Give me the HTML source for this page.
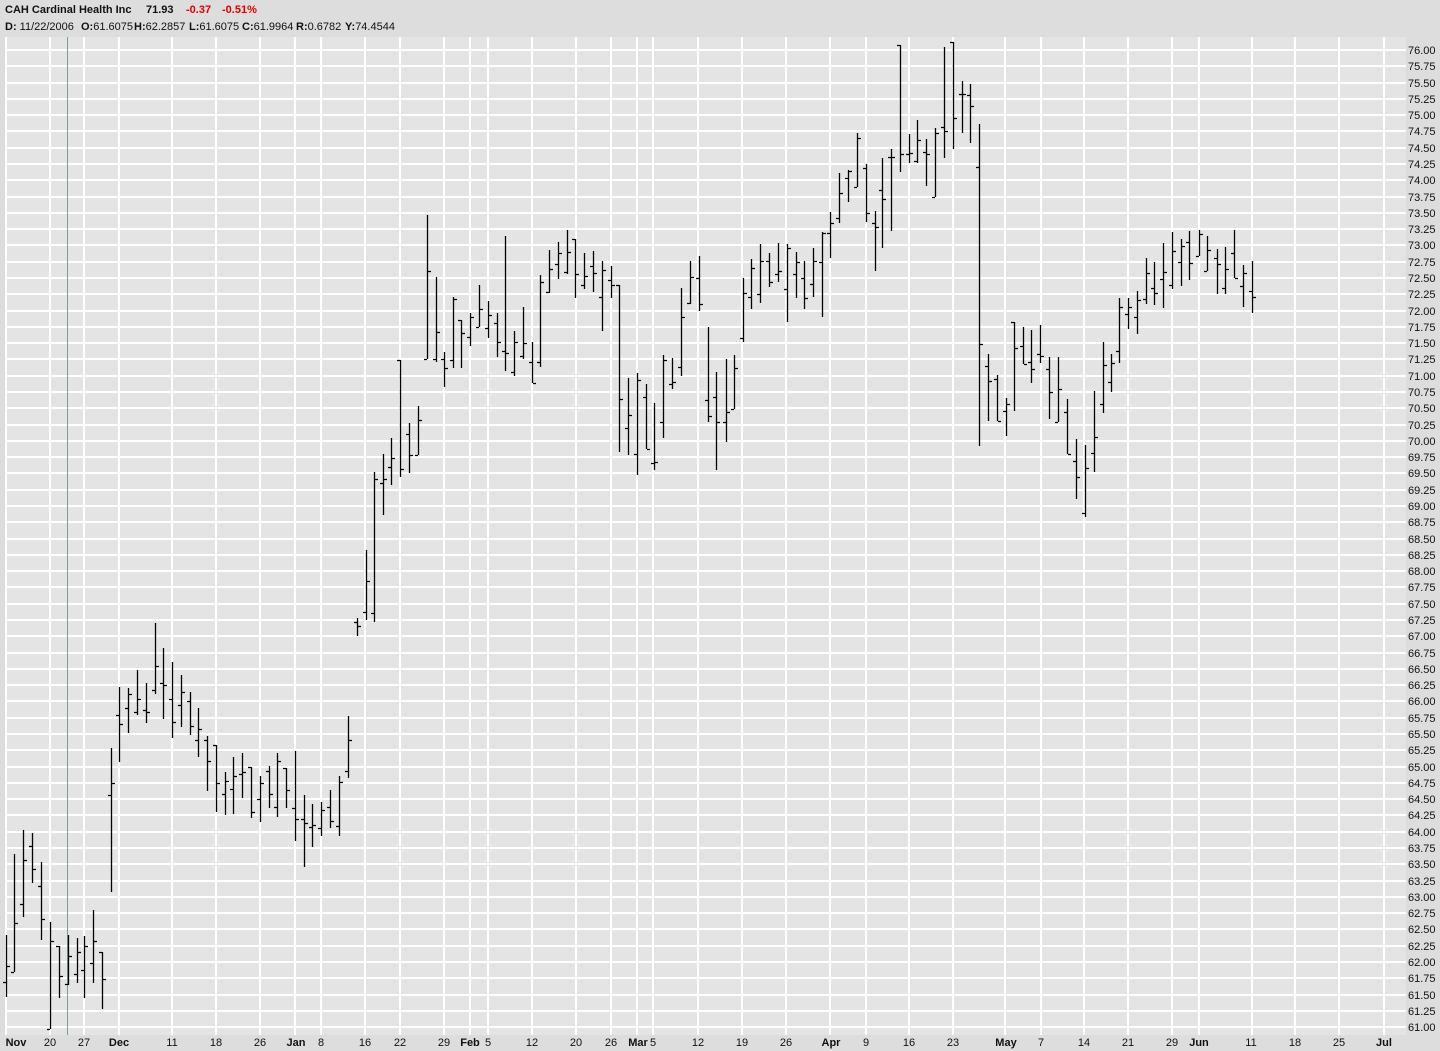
<!DOCTYPE html>
<html><head><meta charset="utf-8"><style>
html,body{margin:0;padding:0;width:1440px;height:1051px;overflow:hidden;background:#dddddd;font-family:"Liberation Sans",Arial,sans-serif;}
.h{position:absolute;font-size:11px;color:#111;white-space:nowrap}
.b{font-weight:bold}
.r{color:#e00000}
</style></head><body>
<div class="h b" style="left:5px;top:4px;">CAH Cardinal Health Inc</div>
<div class="h b" style="left:146px;top:4px;">71.93</div>
<div class="h b r" style="left:186px;top:4px;">-0.37</div>
<div class="h b r" style="left:222px;top:4px;">-0.51%</div>
<div class="h" style="left:5px;top:21px;"><b>D:</b> 11/22/2006</div>
<div class="h" style="left:81px;top:21px;"><b>O:</b>61.6075</div>
<div class="h" style="left:134px;top:21px;"><b>H:</b>62.2857</div>
<div class="h" style="left:189px;top:21px;"><b>L:</b>61.6075</div>
<div class="h" style="left:242px;top:21px;"><b>C:</b>61.9964</div>
<div class="h" style="left:296px;top:21px;"><b>R:</b>0.6782</div>
<div class="h" style="left:345px;top:21px;"><b>Y:</b>74.4544</div>
<svg width="1440" height="1051" style="position:absolute;left:0;top:0" xmlns="http://www.w3.org/2000/svg">
<rect x="5" y="37" width="1401" height="998" fill="#e4e4e4"/>
<path stroke="#ffffff" stroke-width="2" fill="none" d="M5 50H1406M5 66H1406M5 83H1406M5 99H1406M5 115H1406M5 131H1406M5 148H1406M5 164H1406M5 180H1406M5 197H1406M5 213H1406M5 229H1406M5 245H1406M5 262H1406M5 278H1406M5 294H1406M5 311H1406M5 327H1406M5 343H1406M5 359H1406M5 376H1406M5 392H1406M5 408H1406M5 425H1406M5 441H1406M5 457H1406M5 473H1406M5 490H1406M5 506H1406M5 522H1406M5 539H1406M5 555H1406M5 571H1406M5 587H1406M5 604H1406M5 620H1406M5 636H1406M5 653H1406M5 669H1406M5 685H1406M5 701H1406M5 718H1406M5 734H1406M5 750H1406M5 767H1406M5 783H1406M5 799H1406M5 815H1406M5 832H1406M5 848H1406M5 864H1406M5 881H1406M5 897H1406M5 913H1406M5 929H1406M5 946H1406M5 962H1406M5 978H1406M5 995H1406M5 1011H1406M5 1027H1406"/>
<path stroke="#ffffff" stroke-width="2" fill="none" d="M6 37V1035M50 37V1035M84 37V1035M119 37V1035M172 37V1035M216 37V1035M260 37V1035M295 37V1035M321 37V1035M365 37V1035M400 37V1035M444 37V1035M470 37V1035M488 37V1035M532 37V1035M576 37V1035M611 37V1035M637 37V1035M653 37V1035M698 37V1035M742 37V1035M786 37V1035M830 37V1035M866 37V1035M909 37V1035M953 37V1035M1005 37V1035M1041 37V1035M1084 37V1035M1128 37V1035M1172 37V1035M1199 37V1035M1252 37V1035M1295 37V1035M1339 37V1035M1384 37V1035"/>
<line x1="67.5" y1="37" x2="67.5" y2="1035" stroke="#7a9e9e" stroke-width="1"/>
<path stroke="#000" stroke-width="1.3" fill="none" d="
M6.5 935V997M3 982.5h3M7 966.5h3
M14.5 854V972M11 972.5h3M15 923.5h3
M23.5 830V917M20 904.5h3M24 860.5h3
M32.5 833V883M29 846.5h3M33 869.5h3
M41.5 862V940M38 886.5h3M42 919.5h3
M50.5 922V1029M47 1029.5h3M51 941.5h3
M59.5 946V998M56 946.5h3M60 976.5h3
M68.5 935V985M65 984.5h3M69 956.5h3
M77.5 938V983M74 974.5h3M78 952.5h3
M84.5 936V998M81 970.5h3M85 946.5h3
M93.5 910V983M90 963.5h3M94 941.5h3
M102.5 952V1009M99 952.5h3M103 979.5h3
M111.5 748V892M108 795.5h3M112 783.5h3
M119.5 687V762M116 715.5h3M120 724.5h3
M128.5 688V733M125 708.5h3M129 694.5h3
M137.5 670V715M134 712.5h3M138 699.5h3
M146.5 683V723M143 710.5h3M147 712.5h3
M155.5 623V694M152 690.5h3M156 666.5h3
M163.5 648V719M160 683.5h3M164 685.5h3
M172.5 662V738M169 699.5h3M173 722.5h3
M181.5 675V727M178 705.5h3M182 692.5h3
M190.5 692V735M187 701.5h3M191 726.5h3
M198.5 708V757M195 740.5h3M199 729.5h3
M207.5 736V791M204 740.5h3M208 761.5h3
M216.5 745V812M213 745.5h3M217 783.5h3
M225.5 772V815M222 794.5h3M226 781.5h3
M233.5 757V814M230 789.5h3M234 776.5h3
M242.5 753V798M239 774.5h3M243 772.5h3
M251.5 767V818M248 767.5h3M252 812.5h3
M260.5 776V822M257 799.5h3M261 783.5h3
M269.5 766V808M266 771.5h3M270 794.5h3
M277.5 753V817M274 807.5h3M278 761.5h3
M286.5 768V808M283 768.5h3M287 790.5h3
M295.5 751V841M292 808.5h3M296 819.5h3
M304.5 795V867M301 819.5h3M305 823.5h3
M312.5 804V847M309 827.5h3M313 825.5h3
M321.5 802V836M318 828.5h3M322 810.5h3
M330.5 790V828M327 807.5h3M331 821.5h3
M339.5 776V836M336 826.5h3M340 782.5h3
M348.5 716V778M345 771.5h3M349 740.5h3
M357.5 618V636M354 622.5h3M358 626.5h3
M366.5 550V620M363 612.5h3M367 581.5h3
M374.5 472V622M371 613.5h3M375 479.5h3
M383.5 454V515M380 483.5h3M384 479.5h3
M391.5 438V485M388 467.5h3M392 458.5h3
M400.5 360V477M397 360.5h3M401 469.5h3
M409.5 423V473M406 434.5h3M410 455.5h3
M418.5 406V455M415 455.5h3M419 420.5h3
M427.5 215V359M424 359.5h3M428 271.5h3
M436.5 277V362M433 359.5h3M437 332.5h3
M444.5 352V387M441 359.5h3M445 368.5h3
M453.5 297V368M450 360.5h3M454 299.5h3
M461.5 320V368M458 320.5h3M462 333.5h3
M470.5 313V346M467 337.5h3M471 317.5h3
M479.5 285V327M476 327.5h3M480 309.5h3
M488.5 301V338M485 328.5h3M489 315.5h3
M497.5 313V357M494 323.5h3M498 342.5h3
M505.5 236V371M502 351.5h3M506 353.5h3
M514.5 331V376M511 372.5h3M515 342.5h3
M523.5 307V359M520 356.5h3M524 343.5h3
M532.5 342V383M529 362.5h3M533 383.5h3
M540.5 275V367M537 362.5h3M541 282.5h3
M549.5 250V293M546 292.5h3M550 269.5h3
M558.5 242V279M555 264.5h3M559 253.5h3
M567.5 230V274M564 272.5h3M568 252.5h3
M575.5 239V298M572 239.5h3M576 274.5h3
M584.5 253V289M581 285.5h3M585 276.5h3
M593.5 251V292M590 266.5h3M594 273.5h3
M602.5 261V331M599 297.5h3M603 270.5h3
M611.5 266V298M608 280.5h3M612 285.5h3
M619.5 285V452M616 285.5h3M620 399.5h3
M628.5 378V455M625 428.5h3M629 415.5h3
M637.5 373V475M634 454.5h3M638 380.5h3
M646.5 384V449M643 397.5h3M647 449.5h3
M654.5 403V470M651 463.5h3M655 462.5h3
M663.5 355V438M660 422.5h3M664 360.5h3
M672.5 358V389M669 384.5h3M673 382.5h3
M681.5 288V376M678 367.5h3M682 317.5h3
M690.5 261V304M687 303.5h3M691 277.5h3
M699.5 256V311M696 278.5h3M700 304.5h3
M708.5 327V422M705 400.5h3M709 416.5h3
M716.5 372V470M713 397.5h3M717 422.5h3
M726.5 359V442M723 422.5h3M727 412.5h3
M734.5 355V409M731 409.5h3M735 368.5h3
M743.5 278V342M740 338.5h3M744 293.5h3
M751.5 259V309M748 297.5h3M752 268.5h3
M760.5 244V303M757 294.5h3M761 261.5h3
M769.5 253V287M766 261.5h3M770 282.5h3
M778.5 243V282M775 274.5h3M779 271.5h3
M787.5 244V322M784 289.5h3M788 248.5h3
M796.5 252V298M793 274.5h3M797 262.5h3
M804.5 261V309M801 278.5h3M805 298.5h3
M813.5 248V297M810 284.5h3M814 261.5h3
M822.5 232V317M819 262.5h3M823 233.5h3
M830.5 212V258M827 233.5h3M831 223.5h3
M839.5 173V223M836 218.5h3M840 193.5h3
M848.5 170V202M845 178.5h3M849 171.5h3
M857.5 133V187M854 187.5h3M858 138.5h3
M866.5 164V222M863 168.5h3M867 213.5h3
M875.5 211V271M872 223.5h3M876 227.5h3
M882.5 158V248M879 190.5h3M883 199.5h3
M891.5 149V231M888 157.5h3M892 157.5h3
M900.5 45V172M897 45.5h3M901 154.5h3
M909.5 134V163M906 154.5h3M910 153.5h3
M917.5 120V163M914 161.5h3M918 140.5h3
M926.5 139V186M923 152.5h3M927 154.5h3
M935.5 128V197M932 197.5h3M936 133.5h3
M944.5 47V158M941 127.5h3M945 131.5h3
M953.5 42V149M950 42.5h3M954 118.5h3
M962.5 81V133M959 94.5h3M963 94.5h3
M970.5 84V143M967 95.5h3M971 106.5h3
M979.5 124V446M976 167.5h3M980 344.5h3
M988.5 354V421M985 366.5h3M989 381.5h3
M997.5 375V421M994 379.5h3M998 421.5h3
M1006.5 398V436M1003 411.5h3M1007 404.5h3
M1014.5 322V411M1011 322.5h3M1015 348.5h3
M1023.5 327V364M1020 346.5h3M1024 364.5h3
M1031.5 330V383M1028 362.5h3M1032 369.5h3
M1040.5 325V363M1037 354.5h3M1041 356.5h3
M1049.5 357V419M1046 369.5h3M1050 392.5h3
M1058.5 357V422M1055 422.5h3M1059 389.5h3
M1067.5 399V454M1064 412.5h3M1068 454.5h3
M1076.5 439V499M1073 461.5h3M1077 477.5h3
M1085.5 445V517M1082 513.5h3M1086 468.5h3
M1094.5 391V472M1091 453.5h3M1095 437.5h3
M1103.5 342V413M1100 404.5h3M1104 365.5h3
M1111.5 354V392M1108 382.5h3M1112 363.5h3
M1119.5 298V363M1116 351.5h3M1120 307.5h3
M1128.5 298V329M1125 314.5h3M1129 307.5h3
M1137.5 291V334M1134 317.5h3M1138 300.5h3
M1146.5 258V304M1143 299.5h3M1147 273.5h3
M1154.5 262V305M1151 288.5h3M1155 293.5h3
M1163.5 243V308M1160 279.5h3M1164 272.5h3
M1172.5 232V289M1169 285.5h3M1173 251.5h3
M1181.5 239V286M1178 262.5h3M1182 246.5h3
M1189.5 231V280M1186 242.5h3M1190 263.5h3
M1199.5 230V256M1196 256.5h3M1200 234.5h3
M1207.5 236V271M1204 271.5h3M1208 250.5h3
M1217.5 249V294M1214 258.5h3M1218 264.5h3
M1225.5 247V294M1222 288.5h3M1226 269.5h3
M1234.5 230V278M1231 253.5h3M1235 278.5h3
M1243.5 265V307M1240 286.5h3M1244 273.5h3
M1252.5 261V313M1249 291.5h3M1253 297.5h3
"/>
<g font-family="Liberation Sans, Arial, sans-serif" font-size="11" fill="#111">
<text x="1408" y="54">76.00</text><text x="1408" y="70">75.75</text><text x="1408" y="87">75.50</text><text x="1408" y="103">75.25</text><text x="1408" y="119">75.00</text><text x="1408" y="135">74.75</text><text x="1408" y="152">74.50</text><text x="1408" y="168">74.25</text><text x="1408" y="184">74.00</text><text x="1408" y="201">73.75</text><text x="1408" y="217">73.50</text><text x="1408" y="233">73.25</text><text x="1408" y="249">73.00</text><text x="1408" y="266">72.75</text><text x="1408" y="282">72.50</text><text x="1408" y="298">72.25</text><text x="1408" y="315">72.00</text><text x="1408" y="331">71.75</text><text x="1408" y="347">71.50</text><text x="1408" y="363">71.25</text><text x="1408" y="380">71.00</text><text x="1408" y="396">70.75</text><text x="1408" y="412">70.50</text><text x="1408" y="429">70.25</text><text x="1408" y="445">70.00</text><text x="1408" y="461">69.75</text><text x="1408" y="477">69.50</text><text x="1408" y="494">69.25</text><text x="1408" y="510">69.00</text><text x="1408" y="526">68.75</text><text x="1408" y="543">68.50</text><text x="1408" y="559">68.25</text><text x="1408" y="575">68.00</text><text x="1408" y="591">67.75</text><text x="1408" y="608">67.50</text><text x="1408" y="624">67.25</text><text x="1408" y="640">67.00</text><text x="1408" y="657">66.75</text><text x="1408" y="673">66.50</text><text x="1408" y="689">66.25</text><text x="1408" y="705">66.00</text><text x="1408" y="722">65.75</text><text x="1408" y="738">65.50</text><text x="1408" y="754">65.25</text><text x="1408" y="771">65.00</text><text x="1408" y="787">64.75</text><text x="1408" y="803">64.50</text><text x="1408" y="819">64.25</text><text x="1408" y="836">64.00</text><text x="1408" y="852">63.75</text><text x="1408" y="868">63.50</text><text x="1408" y="885">63.25</text><text x="1408" y="901">63.00</text><text x="1408" y="917">62.75</text><text x="1408" y="933">62.50</text><text x="1408" y="950">62.25</text><text x="1408" y="966">62.00</text><text x="1408" y="982">61.75</text><text x="1408" y="999">61.50</text><text x="1408" y="1015">61.25</text><text x="1408" y="1031">61.00</text>
</g>
<g font-family="Liberation Sans, Arial, sans-serif" font-size="11" fill="#111" text-anchor="middle">
<text x="16" y="1046" font-weight="bold">Nov</text><text x="50" y="1046">20</text><text x="84" y="1046">27</text><text x="119" y="1046" font-weight="bold">Dec</text><text x="172" y="1046">11</text><text x="216" y="1046">18</text><text x="260" y="1046">26</text><text x="296" y="1046" font-weight="bold">Jan</text><text x="321" y="1046">8</text><text x="365" y="1046">16</text><text x="400" y="1046">22</text><text x="444" y="1046">29</text><text x="470" y="1046" font-weight="bold">Feb</text><text x="488" y="1046">5</text><text x="532" y="1046">12</text><text x="576" y="1046">20</text><text x="611" y="1046">26</text><text x="638" y="1046" font-weight="bold">Mar</text><text x="653" y="1046">5</text><text x="698" y="1046">12</text><text x="742" y="1046">19</text><text x="786" y="1046">26</text><text x="831" y="1046" font-weight="bold">Apr</text><text x="866" y="1046">9</text><text x="909" y="1046">16</text><text x="953" y="1046">23</text><text x="1006" y="1046" font-weight="bold">May</text><text x="1041" y="1046">7</text><text x="1084" y="1046">14</text><text x="1128" y="1046">21</text><text x="1172" y="1046">29</text><text x="1199" y="1046" font-weight="bold">Jun</text><text x="1251" y="1046">11</text><text x="1295" y="1046">18</text><text x="1339" y="1046">25</text><text x="1384" y="1046" font-weight="bold">Jul</text>
</g>
</svg>
</body></html>
